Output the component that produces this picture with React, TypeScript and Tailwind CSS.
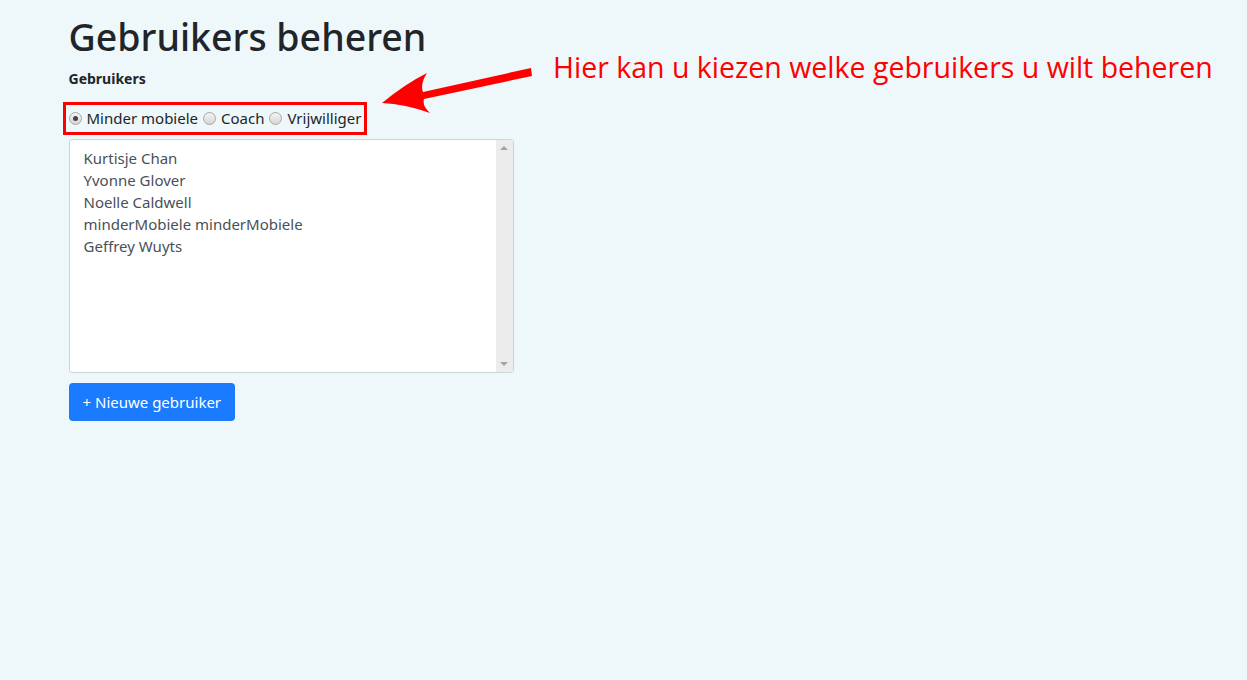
const users = [
  "Kurtisje Chan",
  "Yvonne Glover",
  "Noelle Caldwell",
  "minderMobiele minderMobiele",
  "Geffrey Wuyts",
];

const Radio = ({ checked }: { checked?: boolean }) => (
  <span className="inline-flex size-[13px] items-center justify-center rounded-full border border-[#a8a8a8] bg-gradient-to-b from-[#f4f4f4] to-[#d6d6d6]">
    {checked && <span className="size-[5px] rounded-full bg-[#444]" />}
  </span>
);

export default function App() {
  return (
    <div className="relative min-h-[680px] bg-[#eef7fa] font-['Noto_Sans',sans-serif] text-[#212529]">
      <div className="mx-auto max-w-[1140px] px-[15px] pt-[14px]">
        <h1 className="text-[37.5px] font-medium leading-[45px]">Gebruikers beheren</h1>
        <p className="mt-[9px] text-[14px] font-bold leading-[21px]">Gebruikers</p>

        <div className="-ml-[6px] mt-[13px] inline-flex h-[33px] items-center gap-[5px] border-[3px] border-[#ff0000] pl-[3px] pr-[3px] text-[15px] leading-[21px]">
          <Radio checked />
          <span>Minder mobiele</span>
          <Radio />
          <span>Coach</span>
          <Radio />
          <span>Vrijwilliger</span>
        </div>

        <div className="mt-[4px] flex h-[234px] w-[445px] overflow-hidden rounded-[3px] border border-[#ced4da] bg-white">
          <ul className="flex-1 px-[14px] pt-[7px] text-[15px] leading-[22px] text-[#495057]">
            {users.map((u) => (
              <li key={u}>{u}</li>
            ))}
          </ul>
          <div className="flex w-[17px] flex-col items-center justify-between bg-[#ececec] py-[6px]">
            <span className="h-0 w-0 border-x-[4px] border-b-[4px] border-x-transparent border-b-[#a3a3a3]" />
            <span className="h-0 w-0 border-x-[4px] border-t-[4px] border-x-transparent border-t-[#a3a3a3]" />
          </div>
        </div>

        <button className="mt-[10px] h-[38px] rounded-[4px] bg-[#1a7bff] px-[14px] text-[15px] text-white">
          + Nieuwe gebruiker
        </button>
      </div>

      <p className="absolute left-[553px] top-[47px] font-['Open_Sans',sans-serif] text-[28.5px] leading-[40px] text-[#ff0000]">
        Hier kan u kiezen welke gebruikers u wilt beheren
      </p>
      <svg className="absolute left-[375px] top-[60px]" width="165" height="60" viewBox="0 0 165 60">
        <path
          d="M7 43 Q30 24 52 13 Q45 24 48 32 L156 8 L157 16 L49 39 Q47 46 55 53 Q30 44 7 43 Z"
          fill="#ff0000"
        />
      </svg>
    </div>
  );
}
